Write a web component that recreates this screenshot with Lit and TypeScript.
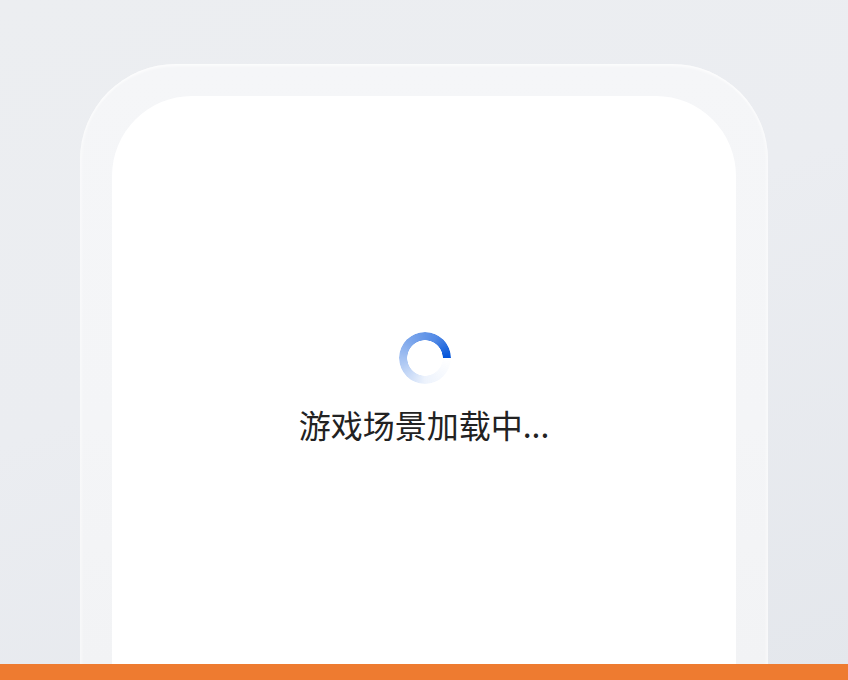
import { LitElement, html, css } from 'lit';
import { customElement } from 'lit/decorators.js';

@customElement('app-root')
export class AppRoot extends LitElement {
  static styles = css`
    :host {
      display: flex;
      flex-direction: column;
      width: 848px;
      height: 680px;
      overflow: hidden;
      background: linear-gradient(160deg, #eceef1 0%, #ebedf1 45%, #e4e7ec 100%);
      font-family: 'Noto Sans CJK SC', 'Noto Sans', sans-serif;
    }

    .stage {
      flex: 1;
      min-height: 0;
      padding: 64px 80px 0;
    }

    .shell {
      box-sizing: border-box;
      height: 100%;
      padding: 32px 32px 0;
      border-radius: 96px 96px 0 0;
      background: linear-gradient(180deg, #f5f6f8 0%, #f4f5f7 60%, #f2f3f5 100%);
      box-shadow: inset 0 3px 3px -1px rgba(255, 255, 255, 0.7), inset 3px 0 3px -1px rgba(255, 255, 255, 0.45),
        inset -3px 0 3px -1px rgba(255, 255, 255, 0.45);
    }

    .panel {
      display: flex;
      flex-direction: column;
      align-items: center;
      height: 100%;
      padding-top: 236px;
      box-sizing: border-box;
      border-radius: 80px 80px 0 0;
      background: #fff;
    }

    .spinner {
      width: 52px;
      height: 52px;
      margin-left: 2px;
      border-radius: 50%;
      background: conic-gradient(from 90deg, rgba(0, 82, 217, 0) 0deg, rgba(0, 82, 217, 0.07) 90deg, rgba(0, 82, 217, 0.5) 225deg, rgba(0, 82, 217, 0.68) 300deg, #0052d9 360deg);
      -webkit-mask: radial-gradient(circle closest-side, transparent 17.5px, #000 18px);
      mask: radial-gradient(circle closest-side, transparent 17.5px, #000 18px);
    }

    .label {
      margin-top: 16px;
      font-size: 32px;
      line-height: 48px;
      color: #222;
      white-space: nowrap;
    }

    .bar {
      flex: none;
      height: 16px;
      background: #ee7b30;
    }
  `;

  render() {
    return html`
      <div class="stage">
        <div class="shell">
          <div class="panel">
            <div class="spinner"></div>
            <div class="label">游戏场景加载中...</div>
          </div>
        </div>
      </div>
      <div class="bar"></div>
    `;
  }
}
